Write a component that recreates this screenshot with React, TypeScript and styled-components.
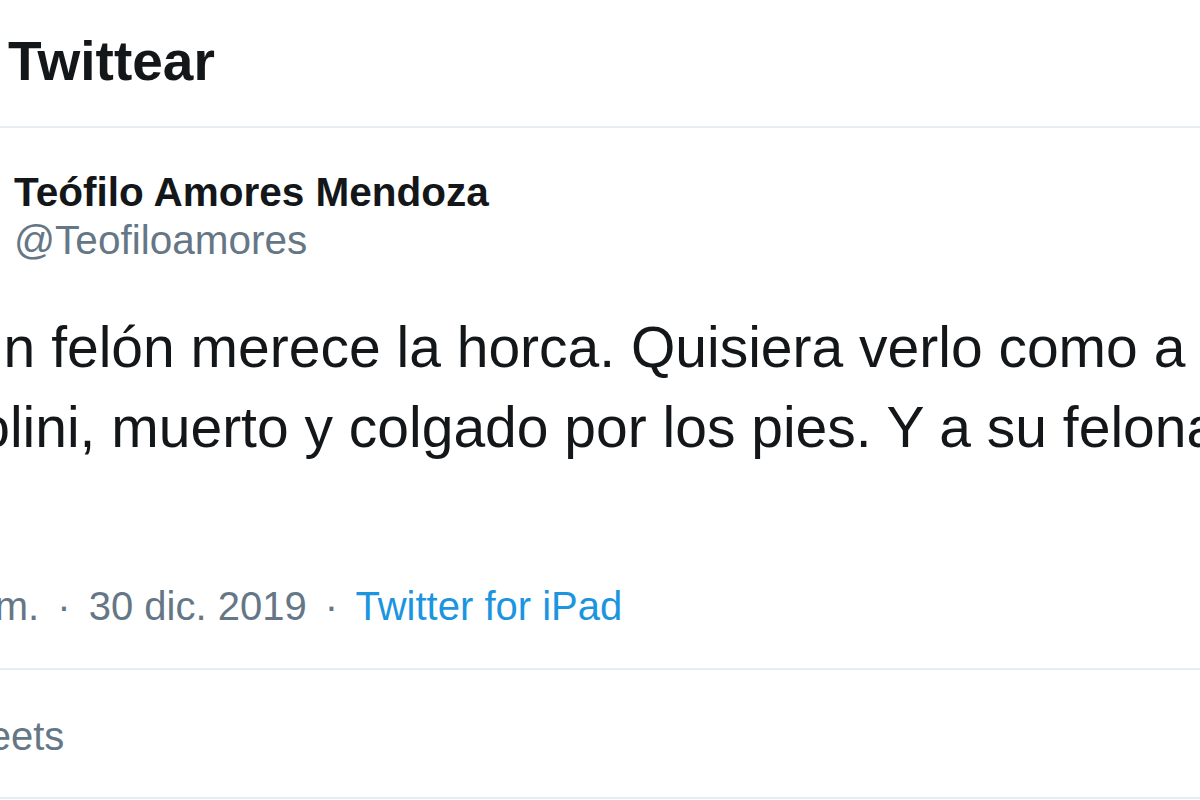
import React from 'react';
import styled, { createGlobalStyle } from 'styled-components';

const GlobalStyle = createGlobalStyle`
  html,
  body {
    margin: 0;
    padding: 0;
    background: #ffffff;
  }

  body {
    font-family: "Liberation Sans", Arial, Helvetica, sans-serif;
    color: #14171a;
  }
`;

const Frame = styled.div`
  width: 1200px;
  height: 800px;
  overflow: hidden;
  background: #ffffff;
`;

// the picture is a zoomed crop, so the tweet column starts left of the frame
const Column = styled.main`
  width: 1600px;
  margin-left: -158px;
`;

const Header = styled.header`
  display: flex;
  align-items: center;
  padding: 29px 0 33px;
  border-bottom: 2px solid #e6ecf0;
`;

const BackButton = styled.button`
  display: flex;
  align-items: center;
  justify-content: center;
  width: 60px;
  height: 60px;
  margin: 0 66px 0 40px;
  padding: 0;
  border: none;
  background: transparent;
  color: #1da1f2;
`;

const Title = styled.h1`
  margin: 0;
  font-size: 55px;
  line-height: 64px;
  font-weight: 700;
  color: #14171a;
`;

const UserRow = styled.div`
  display: flex;
  align-items: flex-start;
  gap: 41px;
  padding-top: 40px;
`;

const Avatar = styled.div`
  width: 131px;
  height: 131px;
  border-radius: 50%;
  background: #ccd6dd;
  flex-shrink: 0;
`;

const Names = styled.div`
  display: flex;
  flex-direction: column;
`;

const Name = styled.span`
  font-size: 40.5px;
  line-height: 48px;
  font-weight: 700;
  color: #14171a;
`;

const Handle = styled.span`
  font-size: 40.5px;
  line-height: 48px;
  color: #657786;
`;

const Body = styled.p`
  width: 1540px;
  margin: 8px 0 0;
  font-size: 57px;
  line-height: 80px;
  color: #14171a;
`;

const Meta = styled.div`
  margin-top: 113px;
  padding-bottom: 36px;
  font-size: 40px;
  line-height: 52px;
  color: #657786;
  border-bottom: 2px solid #e6ecf0;
`;

const Dot = styled.span`
  margin: 0 7px;
`;

const SourceLink = styled.a`
  color: #1b95e0;
  text-decoration: none;
`;

const Stats = styled.div`
  padding: 40px 0 35px;
  font-size: 40px;
  line-height: 52px;
  color: #657786;
  border-bottom: 2px solid #e6ecf0;
`;

const Count = styled.strong`
  font-weight: 700;
  color: #14171a;
`;

const ArrowLeft = () => (
  <svg width="45" height="45" viewBox="0 0 24 24" fill="currentColor">
    <path d="M20 11H7.414l4.293-4.293a1 1 0 0 0-1.414-1.414l-6 6a1 1 0 0 0 0 1.414l6 6a.996.996 0 0 0 1.414 0 1 1 0 0 0 0-1.414L7.414 13H20a1 1 0 1 0 0-2z" />
  </svg>
);

export default function App() {
  return (
    <Frame>
      <GlobalStyle />
      <Column>
        <Header>
          <BackButton aria-label="Atrás">
            <ArrowLeft />
          </BackButton>
          <Title>Twittear</Title>
        </Header>

        <UserRow>
          <Avatar />
          <Names>
            <Name>Teófilo Amores Mendoza</Name>
            <Handle>@Teofiloamores</Handle>
          </Names>
        </UserRow>

        <Body>
          Sólo un felón merece la horca. Quisiera verlo como a Mussolini, muerto y colgado por los pies. Y a su
          felona.
        </Body>

        <Meta>
          11:42 p. m. <Dot>·</Dot> 30 dic. 2019 <Dot>·</Dot>{' '}
          <SourceLink href="#">Twitter for iPad</SourceLink>
        </Meta>

        <Stats>
          <Count>12</Count> Retweets
        </Stats>
      </Column>
    </Frame>
  );
}
